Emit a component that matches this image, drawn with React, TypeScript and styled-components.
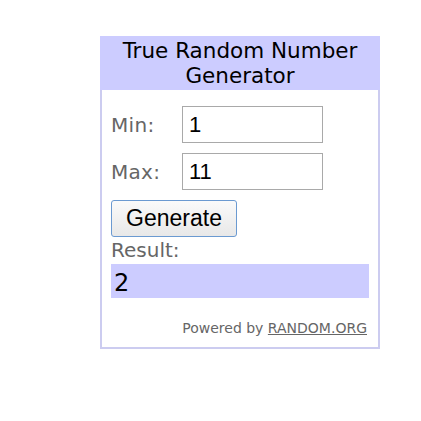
import React from "react";
import styled, { createGlobalStyle } from "styled-components";

const Global = createGlobalStyle`
  html, body { margin: 0; padding: 0; background: #fff; }
  body { font-family: "DejaVu Sans", Verdana, sans-serif; }
`;

const Page = styled.div`
  padding: 36px 0 0 100px;
`;

const Widget = styled.div`
  width: 276px;
  border: 2px solid #ccccf0;
  border-top: none;
  background: #fff;
`;

const Header = styled.div`
  background: #ccccff;
  margin: 0 -2px;
  padding: 2px 0 2px;
  text-align: center;
  font-size: 21.5px;
  line-height: 25px;
  color: #000;
`;

const Body = styled.div`
  padding: 16px 10px 10px 9px;
`;

const Row = styled.div`
  display: flex;
  align-items: center;
  margin-bottom: 10px;
`;

const Label = styled.span`
  width: 71px;
  font-size: 20px;
  letter-spacing: 0.3px;
  color: #666;
`;

const Input = styled.input`
  box-sizing: border-box;
  width: 141px;
  height: 37px;
  border: 1px solid #a9a9a9;
  padding: 2px 6px;
  font-family: "Liberation Sans", Arial, sans-serif;
  font-size: 22px;
  color: #000;
  outline: none;
`;

const Button = styled.button`
  box-sizing: border-box;
  display: block;
  width: 126px;
  height: 37px;
  border: 1px solid #6b9ad1;
  border-radius: 3px;
  background: linear-gradient(#fafafa, #e8e8e8);
  font-family: "Liberation Sans", Arial, sans-serif;
  font-size: 23px;
  color: #000;
  padding: 0;
`;

const ResultLabel = styled.div`
  font-size: 20px;
  color: #666;
  line-height: 26px;
`;

const ResultBox = styled.div`
  background: #ccccff;
  height: 34px;
  width: 258px;
  margin-top: 1px;
  padding-left: 3px;
  box-sizing: border-box;
  font-size: 24px;
  line-height: 38px;
  color: #000;
`;

const Footer = styled.div`
  text-align: right;
  padding-right: 1px;
  margin-top: 21px;
  font-size: 14px;
  color: #666;
  line-height: 18px;
  a { color: #666; text-decoration: underline; }
`;

export default function App() {
  return (
    <Page>
      <Global />
      <Widget>
        <Header>True Random Number<br />Generator</Header>
        <Body>
          <Row>
            <Label>Min:</Label>
            <Input defaultValue="1" />
          </Row>
          <Row>
            <Label>Max:</Label>
            <Input defaultValue="11" />
          </Row>
          <Button>Generate</Button>
          <ResultLabel>Result:</ResultLabel>
          <ResultBox>2</ResultBox>
          <Footer>
            Powered by <a href="#">RANDOM.ORG</a>
          </Footer>
        </Body>
      </Widget>
    </Page>
  );
}
